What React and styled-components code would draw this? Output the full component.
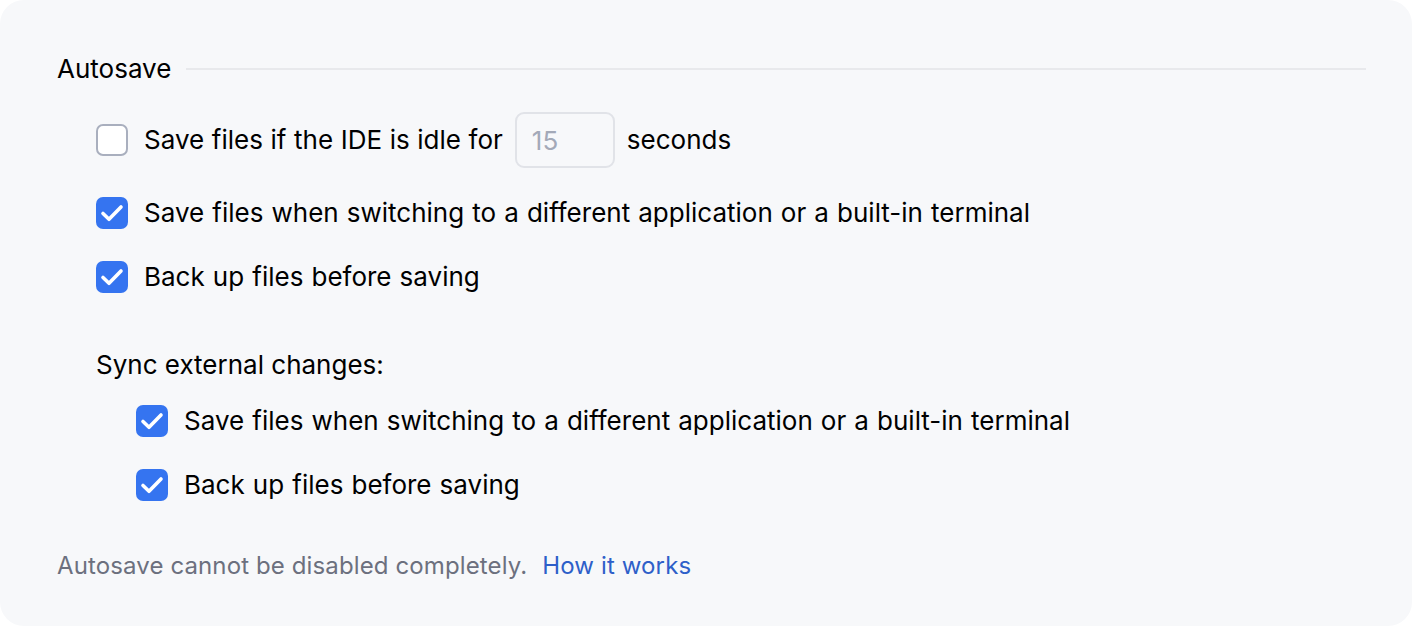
import React, { useState } from 'react'
import styled, { createGlobalStyle } from 'styled-components'

const GlobalStyle = createGlobalStyle`
  body {
    margin: 0;
    background: #ffffff;
    font-family: Inter, "Noto Sans", sans-serif;
  }
`

const Card = styled.div`
  box-sizing: border-box;
  width: 1412px;
  height: 626px;
  background: #f7f8fa;
  border-radius: 24px;
  padding: 53px 46px 0 57px;
  display: flex;
  flex-direction: column;
  color: #000;
`

const Heading = styled.div`
  display: flex;
  align-items: center;
  gap: 15px;
  height: 32px;
  font-size: 26px;
  line-height: 32px;

  &::after {
    content: '';
    flex: 1;
    height: 2px;
    background: #e8e9ec;
  }
`

const Group = styled.div`
  display: flex;
  flex-direction: column;
  gap: 16px;
  margin: ${(p) => p.$top}px 0 0 ${(p) => p.$indent}px;
`

const Row = styled.label`
  display: flex;
  align-items: center;
  gap: 16px;
  min-height: ${(p) => (p.$tall ? 66 : 48)}px;
  font-size: 26px;
  line-height: 32px;
  word-spacing: 0.8px;
  cursor: pointer;
`

const Box = styled.span`
  box-sizing: border-box;
  width: 32px;
  height: 32px;
  flex: none;
  border-radius: 7px;
  display: flex;
  align-items: center;
  justify-content: center;
  background: ${(p) => (p.$checked ? '#3574f0' : '#ffffff')};
  border: ${(p) => (p.$checked ? 'none' : '2px solid #a9afbe')};
`

const Inline = styled.span`
  display: flex;
  align-items: center;
  gap: 12px;
  word-spacing: 0.3px;
`

const NumberInput = styled.input`
  box-sizing: border-box;
  width: 100px;
  height: 56px;
  border: 2px solid #e1e3e8;
  border-radius: 9px;
  background: #f7f8fa;
  padding: 0 0 0 15px;
  font-family: Inter, sans-serif;
  font-size: 26px;
  color: #a3a9b8;
  outline: none;
`

const SubHeading = styled.div`
  margin: 48px 0 0 39px;
  font-size: 26px;
  line-height: 32px;
`

const Footer = styled.div`
  margin-top: 41px;
  font-size: 24px;
  line-height: 32px;
  letter-spacing: 0.12px;
  color: #6c707e;
  display: flex;
  gap: 15px;
`

const Link = styled.a`
  color: #2e5fc9;
  text-decoration: none;
`

function Check({ checked, onToggle, children, tall }) {
  return (
    <Row $tall={tall} onClick={onToggle}>
      <Box $checked={checked}>
        {checked && (
          <svg width="32" height="32" viewBox="0 0 32 32" fill="none">
            <path d="M7 16.5l6 5.8L25 10" stroke="#fff" strokeWidth="3.6" strokeLinecap="round" strokeLinejoin="round" />
          </svg>
        )}
      </Box>
      {children}
    </Row>
  )
}

export default function App() {
  const [state, setState] = useState({ idle: false, switch1: true, backup1: true, switch2: true, backup2: true })
  const toggle = (k) => () => setState((s) => ({ ...s, [k]: !s[k] }))

  return (
    <>
      <GlobalStyle />
      <Card>
        <Heading>Autosave</Heading>
        <Group $top={22} $indent={39}>
          <Check tall checked={state.idle} onToggle={toggle('idle')}>
            <Inline>
              Save files if the IDE is idle for
              <NumberInput defaultValue="15" onClick={(e) => e.stopPropagation()} />
              seconds
            </Inline>
          </Check>
          <Check checked={state.switch1} onToggle={toggle('switch1')}>
            Save files when switching to a different application or a built-in terminal
          </Check>
          <Check checked={state.backup1} onToggle={toggle('backup1')}>
            Back up files before saving
          </Check>
        </Group>
        <SubHeading>Sync external changes:</SubHeading>
        <Group $top={16} $indent={79}>
          <Check checked={state.switch2} onToggle={toggle('switch2')}>
            Save files when switching to a different application or a built-in terminal
          </Check>
          <Check checked={state.backup2} onToggle={toggle('backup2')}>
            Back up files before saving
          </Check>
        </Group>
        <Footer>
          <span>Autosave cannot be disabled completely.</span>
          <Link href="#">How it works</Link>
        </Footer>
      </Card>
    </>
  )
}
